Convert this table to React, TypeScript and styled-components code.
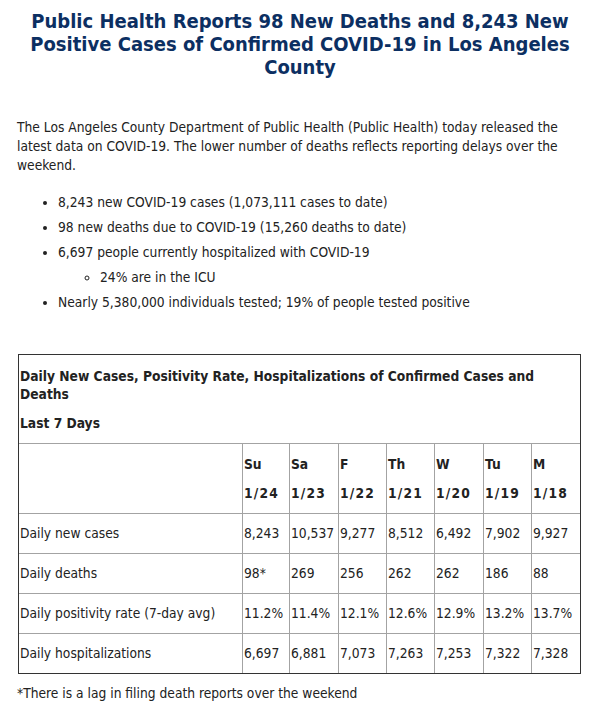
import React from "react";
import styled, { createGlobalStyle } from "styled-components";

const Global = createGlobalStyle`
  html, body { margin: 0; padding: 0; background: #fff; }
  body { font-family: "DejaVu Sans Condensed", "DejaVu Sans", sans-serif; color: #222; }
`;

const Page = styled.div`
  width: 600px;
  box-sizing: border-box;
  padding: 10px 17px 0 17px;
`;

const Title = styled.h1`
  margin: 0;
  padding: 0 10px;
  text-align: center;
  font-size: 20px;
  line-height: 23px;
  font-weight: bold;
  color: #0c2f62;
`;

const Intro = styled.p`
  margin: 39px 0 0 0;
  font-size: 13.7px;
  line-height: 19px;
`;

const List = styled.ul<{ $sub?: boolean }>`
  margin: ${(p) => (p.$sub ? "0" : "18px 0 0 0")};
  padding-left: ${(p) => (p.$sub ? "42px" : "41px")};
  list-style-type: ${(p) => (p.$sub ? "circle" : "disc")};
`;

const Item = styled.li`
  font-size: 13.7px;
  line-height: 19px;
  margin-top: 6px;
`;

const Table = styled.table`
  margin: 42px 0 0 1px;
  width: 563px;
  table-layout: fixed;
  border-collapse: separate;
  border-spacing: 0;
  border: 1px solid #333;
  font-size: 13.7px;
`;

const CaptionCell = styled.td`
  padding: 12px 1px 11px 1px;
  font-weight: bold;
  line-height: 18px;
  vertical-align: top;
`;

const CaptionLine = styled.div<{ $gap?: boolean }>`
  margin-top: ${(p) => (p.$gap ? "11px" : "0")};
`;

const Cell = styled.td<{ $first?: boolean; $head?: boolean }>`
  border-top: 1px solid #a3a3a3;
  border-left: ${(p) => (p.$first ? "none" : "1px solid #a3a3a3")};
  padding: 0 0 0 1px;
  height: ${(p) => (p.$head ? "69px" : "39px")};
  vertical-align: middle;
  white-space: nowrap;
  line-height: 19px;
  font-weight: ${(p) => (p.$head ? "bold" : "normal")};
`;

const HeadLine = styled.div<{ $date?: boolean }>`
  margin-top: ${(p) => (p.$date ? "10px" : "0")};
  letter-spacing: ${(p) => (p.$date ? "1.2px" : "0")};
`;

const Footnote = styled.p`
  margin: 10px 0 0 0;
  font-size: 13.7px;
  line-height: 19px;
`;

const days = [
  ["Su", "1/24"],
  ["Sa", "1/23"],
  ["F", "1/22"],
  ["Th", "1/21"],
  ["W", "1/20"],
  ["Tu", "1/19"],
  ["M", "1/18"],
];

const rows: [string, string[]][] = [
  ["Daily new cases", ["8,243", "10,537", "9,277", "8,512", "6,492", "7,902", "9,927"]],
  ["Daily deaths", ["98*", "269", "256", "262", "262", "186", "88"]],
  ["Daily positivity rate (7-day avg)", ["11.2%", "11.4%", "12.1%", "12.6%", "12.9%", "13.2%", "13.7%"]],
  ["Daily hospitalizations", ["6,697", "6,881", "7,073", "7,263", "7,253", "7,322", "7,328"]],
];

const colWidths = [223, 47, 49, 48, 48, 49, 48, 49];

export default function App() {
  return (
    <Page>
      <Global />
      <Title>
        Public Health Reports 98 New Deaths and 8,243 New Positive Cases of Confirmed COVID-19 in Los Angeles County
      </Title>
      <Intro>
        The Los Angeles County Department of Public Health (Public Health) today released the latest data on
        COVID-19. The lower number of deaths reflects reporting delays over the weekend.
      </Intro>
      <List>
        <Item>8,243 new COVID-19 cases (1,073,111 cases to date)</Item>
        <Item>98 new deaths due to COVID-19 (15,260 deaths to date)</Item>
        <Item>
          6,697 people currently hospitalized with COVID-19
          <List $sub>
            <Item>24% are in the ICU</Item>
          </List>
        </Item>
        <Item>Nearly 5,380,000 individuals tested; 19% of people tested positive</Item>
      </List>
      <Table>
        <colgroup>
          {colWidths.map((w, i) => (
            <col key={i} style={{ width: w }} />
          ))}
        </colgroup>
        <tbody>
          <tr>
            <CaptionCell colSpan={8}>
              <CaptionLine>Daily New Cases, Positivity Rate, Hospitalizations of Confirmed Cases and Deaths</CaptionLine>
              <CaptionLine $gap>Last 7 Days</CaptionLine>
            </CaptionCell>
          </tr>
          <tr>
            <Cell $first $head />
            {days.map(([d, dt]) => (
              <Cell $head key={dt}>
                <HeadLine>{d}</HeadLine>
                <HeadLine $date>{dt}</HeadLine>
              </Cell>
            ))}
          </tr>
          {rows.map(([label, vals]) => (
            <tr key={label}>
              <Cell $first>{label}</Cell>
              {vals.map((v, i) => (
                <Cell key={i}>{v}</Cell>
              ))}
            </tr>
          ))}
        </tbody>
      </Table>
      <Footnote>*There is a lag in filing death reports over the weekend</Footnote>
    </Page>
  );
}
